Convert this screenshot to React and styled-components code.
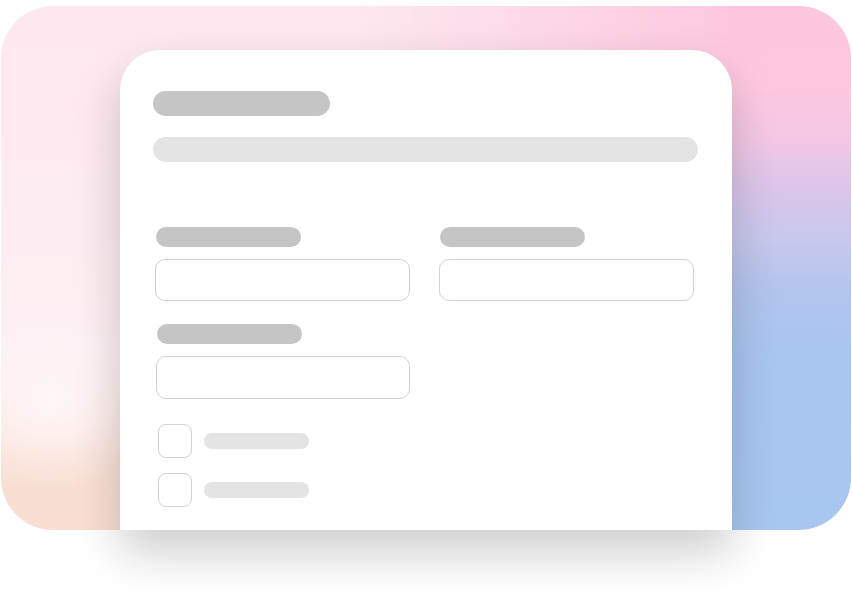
import React from 'react';
import styled, { createGlobalStyle } from 'styled-components';

const GlobalStyle = createGlobalStyle`
  html, body {
    margin: 0;
    padding: 0;
    background: #ffffff;
    font-family: "Liberation Sans", Arial, sans-serif;
  }
`;

const Stage = styled.div`
  width: 852px;
  height: 594px;
  padding: 6px 1px 0;
  box-sizing: border-box;
  background: #ffffff;
  overflow: hidden;
`;

const Panel = styled.div`
  position: relative;
  height: 524px;
  border-radius: 52px;
  display: flex;
  justify-content: center;
  align-items: flex-end;
  background:
    radial-gradient(ellipse 110px 90px at 50px 395px, rgba(255, 248, 250, 0.9) 0%, rgba(255, 248, 250, 0) 100%),
    linear-gradient(
      180deg,
      #fde8ef 0%,
      #fdecf1 40%,
      #fdf0f3 66%,
      #fbe7e2 78%,
      #f9e0d4 86%,
      #f9ded1 100%
    );

  &::before {
    content: '';
    position: absolute;
    inset: 0;
    border-radius: 52px;
    background: linear-gradient(
      180deg,
      #fdc7df 0%,
      #fdc8e0 16%,
      #f4c8e3 25%,
      #dcc6ea 34%,
      #c8c8ec 44%,
      #b3c5ee 54%,
      #a9c6f0 66%,
      #a8c7f0 100%
    );
    -webkit-mask-image: linear-gradient(90deg, transparent 42%, #000 86%);
    mask-image: linear-gradient(90deg, transparent 42%, #000 86%);
  }
`;

const Card = styled.div`
  position: relative;
  z-index: 1;
  width: 612px;
  height: 480px;
  box-sizing: border-box;
  padding: 41px 34px 0 33px;
  background: #ffffff;
  border-radius: 40px 40px 0 0;
  box-shadow: 0 22px 48px rgba(0, 0, 0, 0.2);
`;

const Bar = styled.div`
  width: ${(p) => p.$w || '100%'};
  height: ${(p) => p.$h || 25}px;
  border-radius: ${(p) => (p.$h || 25) / 2}px;
  background: ${(p) => (p.$dark ? '#c5c5c5' : '#e4e4e4')};
  flex-shrink: 0;
`;

const Header = styled.div`
  display: flex;
  flex-direction: column;
  gap: 21px;
`;

const FormGrid = styled.div`
  margin-top: 65px;
  padding-left: 2px;
  display: grid;
  grid-template-columns: 255px 255px;
  column-gap: 29px;
  row-gap: 23px;
`;

const Field = styled.div`
  display: flex;
  flex-direction: column;
  gap: 12px;
  padding-left: ${(p) => p.$shift || 0}px;
`;

const Label = styled(Bar)`
  margin-left: 1px;
`;

const Input = styled.div`
  height: ${(p) => p.$h || 42}px;
  box-sizing: border-box;
  border: 1px solid #d2d2d2;
  border-radius: 10px;
  background: #ffffff;
`;

const Checks = styled.div`
  margin-top: 25px;
  padding-left: 5px;
  display: flex;
  flex-direction: column;
  gap: 15px;
`;

const CheckRow = styled.div`
  display: flex;
  align-items: center;
  gap: 12px;
`;

const Box = styled.div`
  width: 34px;
  height: 34px;
  box-sizing: border-box;
  border: 1.5px solid #d2d2d2;
  border-radius: 8px;
  background: #ffffff;
`;

export default function App() {
  return (
    <>
      <GlobalStyle />
      <Stage>
        <Panel>
          <Card>
            <Header>
              <Bar $dark $w="177px" />
              <Bar />
            </Header>
            <FormGrid>
              <Field>
                <Label $dark $w="145px" $h={20} />
                <Input />
              </Field>
              <Field>
                <Label $dark $w="145px" $h={20} />
                <Input />
              </Field>
              <Field $shift={1}>
                <Label $dark $w="145px" $h={20} />
                <Input $h={43} />
              </Field>
            </FormGrid>
            <Checks>
              <CheckRow>
                <Box />
                <Bar $w="105px" $h={16} />
              </CheckRow>
              <CheckRow>
                <Box />
                <Bar $w="105px" $h={16} />
              </CheckRow>
            </Checks>
          </Card>
        </Panel>
      </Stage>
    </>
  );
}
